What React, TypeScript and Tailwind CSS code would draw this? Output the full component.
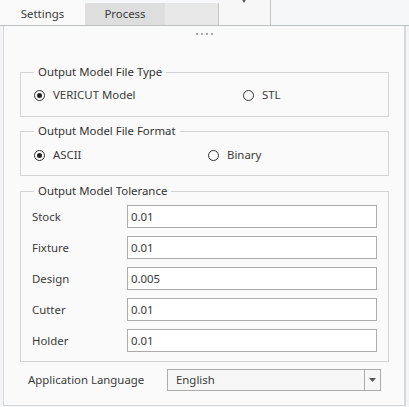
import React from "react";

const font = "font-['Noto_Sans',sans-serif]";

function Radio({ checked, label }: { checked?: boolean; label: string }) {
  return (
    <div className="flex items-center h-4">
      <span className="w-[11px] h-[11px] rounded-full border border-[#333] flex items-center justify-center shrink-0">
        {checked && <span className="w-[5px] h-[5px] rounded-full bg-[#222]" />}
      </span>
      <span className="ml-2">{label}</span>
    </div>
  );
}

function Group({ title, className, children }: { title: string; className?: string; children: React.ReactNode }) {
  return (
    <fieldset className={`ml-4 w-[369px] border border-[#d4d4d4] ${className ?? ""}`}>
      <legend className="ml-[13px] px-1 leading-4 text-[#333]">{title}</legend>
      {children}
    </fieldset>
  );
}

const tolerances = [
  { name: "Stock", value: "0.01" },
  { name: "Fixture", value: "0.01" },
  { name: "Design", value: "0.005" },
  { name: "Cutter", value: "0.01" },
  { name: "Holder", value: "0.01" },
];

export default function App() {
  return (
    <div className={`w-[409px] h-[407px] bg-[#f3f4f5] text-[11.4px] text-[#3a3a3a] ${font}`}>
      {/* tab strip */}
      <div className="flex h-[26px] border-b border-[#b7c2c0] bg-[#f5f7f9]">
        <div className="w-[85px] bg-[#f9f9f9] flex items-center justify-center pt-[2px]">Settings</div>
        <div className="w-[80px] mt-[3px] bg-[#dedede] flex items-center justify-center">Process</div>
        <div className="w-[54px] mt-[3px] bg-[#e8e8e8] border-r border-[#c4c4c4]" />
        <div className="w-[52px] bg-[#f7f7f7] border-r border-[#c4c4c4] relative overflow-hidden">
          <svg className="absolute left-[21px] -top-[4px]" width="8" height="8" viewBox="0 0 8 8">
            <path d="M0 0 H8 L4 7 Z" fill="#555" />
          </svg>
        </div>
        <div className="flex-1" />
      </div>

      {/* content */}
      <div className="ml-[3px] w-[403px] h-[380px] bg-[#fafafa] border-l border-[#d8d8d8] border-r-2 border-r-[#d8d8d8] border-b border-b-[#d8d8d8]">
        <div className="h-4 flex items-center justify-center gap-[3px]">
          {[0, 1, 2, 3].map((i) => (
            <span key={i} className="w-[2px] h-[2px] bg-[#a8a8a8]" />
          ))}
        </div>

        <Group title="Output Model File Type" className="mt-[22px] pt-[7px] pb-[13px]">
          <div className="flex pl-[13px]">
            <div className="w-[209px]">
              <Radio checked label="VERICUT Model" />
            </div>
            <Radio label="STL" />
          </div>
        </Group>

        <Group title="Output Model File Format" className="mt-[6px] pt-[8px] pb-[12px]">
          <div className="flex pl-[13px]">
            <div className="w-[174px]">
              <Radio checked label="ASCII" />
            </div>
            <Radio label="Binary" />
          </div>
        </Group>

        <Group title="Output Model Tolerance" className="mt-[7px] pt-[6px] pb-[9px]">
          <div className="flex flex-col gap-2 pl-[11px]">
            {tolerances.map((t) => (
              <div key={t.name} className="flex items-center">
                <span className="w-[95px]">{t.name}</span>
                <div className="w-[250px] h-[23px] border border-[#ababab] bg-white flex items-center pl-[3px]">
                  {t.value}
                </div>
              </div>
            ))}
          </div>
        </Group>

        <div className="mt-[7px] ml-6 flex items-center">
          <span className="w-[139px]">Application Language</span>
          <div className="w-[214px] h-[22px] border border-[#ababab] bg-[#f7f7f7] flex">
            <div className="flex-1 flex items-center pl-2">English</div>
            <div className="w-[16px] border-l border-[#ababab] flex items-center justify-center">
              <svg width="7" height="4" viewBox="0 0 7 4">
                <path d="M0 0 H7 L3.5 4 Z" fill="#555" />
              </svg>
            </div>
          </div>
        </div>
      </div>
    </div>
  );
}
